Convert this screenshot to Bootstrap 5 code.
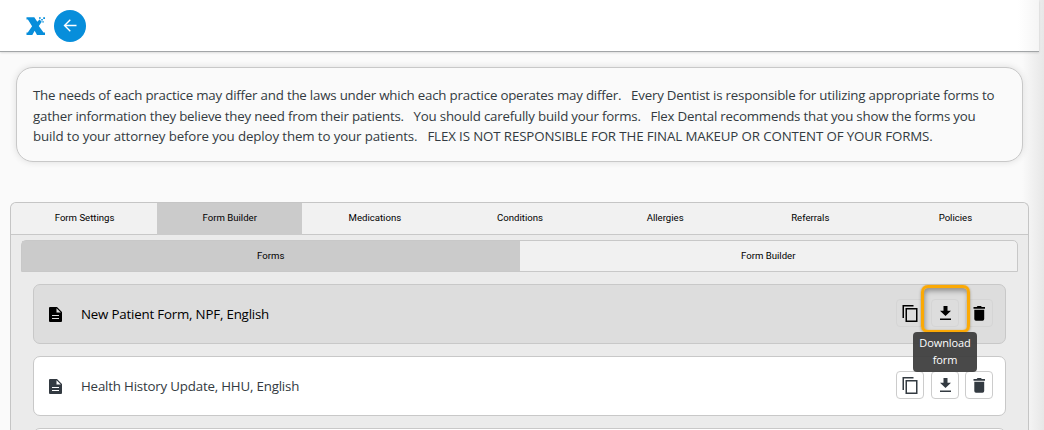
<!DOCTYPE html>
<html lang="en">
<head>
<meta charset="utf-8">
<title>Form Builder</title>
<link href="https://cdn.jsdelivr.net/npm/bootstrap@5.3.0/dist/css/bootstrap.min.css" rel="stylesheet">
<script src="https://cdn.jsdelivr.net/npm/bootstrap@5.3.0/dist/js/bootstrap.bundle.min.js"></script>
<style>
html, body { height: 430px; overflow: hidden; }
body { background: #fafafa; font-family: "Open Sans", "Noto Sans", sans-serif; font-size: 13.3px; color: #333a41; }
.app { height: 430px; }
.edge-fade { top: 0; right: 0; width: 22px; height: 430px; background: linear-gradient(to right, rgba(232,232,232,0), rgba(229,229,229,.9)); z-index: 0; }
.app-bar { height: 52px; width: 1039px; padding-left: 26px; border-bottom: 1px solid #a2a5a7; background: linear-gradient(to right, #fff 1018px, #f5f5f5); box-shadow: 0 1px 2px rgba(0,0,0,.12); z-index: 1; }
.back-btn { width: 32px; height: 32px; background: #078edb; margin-left: 8px; }
.notice { margin: 15px 21px 0 16px; height: 95px; padding: 17px 0 0 16px; border: 1px solid #c8c8c8; border-radius: 17px; background: #fafafa; box-shadow: 0 0 7px rgba(0,0,0,.12); z-index: 1; }
.notice-line { display: block; line-height: 20px; white-space: pre; }
.l1, .l2 { letter-spacing: -.208px; }
.l1 { line-height: 21px; }
.l3 { letter-spacing: -.125px; }
.panel { margin: 40px 15px 0 10px; width: 1019px; height: 228px; overflow: hidden; background: #ebebeb; border: 1px solid #c5c5c5; border-bottom: 0; border-radius: 6px 6px 0 0; z-index: 1; }
.tab-strip { font-family: Roboto, sans-serif; font-size: 9.6px; color: #000; background: #f1f1f1; }
.main-tabs { height: 32px; padding-left: 1px; border-bottom: 1px solid #c8c8c8; border-radius: 5px 5px 0 0; }
.sub-tabs { height: 32px; margin: 5px 10px 0; border: 1px solid #c8c8c8; border-radius: 5px 5px 0 0; }
.tab-item { display: flex; flex: 1 1 0; align-items: center; justify-content: center; padding-bottom: 0; }
.tab-on { background: #cbcbcb; }
.main-tabs .tab-on { margin-bottom: -1px; padding-bottom: 1px; }
.form-row { height: 60px; margin: 12px 22px 0; padding: 0 12px 0 13px; border: 1px solid #c8c8c8; border-radius: 7px; background: #fff; }
.form-row.hovered { background: #ddd; color: #000; }
.form-name { margin-left: 17px; padding-top: 1px; white-space: nowrap; letter-spacing: -.19px; }
.tool-btn { width: 28px; height: 28px; border: 1px solid #ccc; border-radius: 4px; background: transparent; color: inherit; }
.hovered .tool-btn { border-color: #d5d5d5; }
.spot { left: -10px; top: -14px; width: 49px; height: 48px; border: 3px solid #fba905; border-radius: 7px; box-shadow: 0 0 1px #fba905, 0 1px 3px rgba(0,0,0,.3), inset 0 0 1px #fba905, inset 1px 3px 5px rgba(0,0,0,.35); z-index: 3; }
.tip { left: -18px; top: 33px; width: 64px; height: 40px; padding-top: 2px; border-radius: 4px; background: rgba(62,62,62,.94); color: #fff; font-size: 11px; letter-spacing: -.1px; line-height: 17px; z-index: 4; }
.tool-group { margin-top: -2px; }
</style>
</head>
<body>
<div class="app position-relative d-flex flex-column">
  <div class="edge-fade position-absolute"></div>
  <header class="app-bar d-flex align-items-center flex-shrink-0 position-relative">
    <svg width="20" height="20" viewBox="0 0 20 20" fill="#078edb">
      <path d="M.5 1.200h7.800l3 4.600 2.200-2.300 2.300 2.200-3 4.300 4.700 6.600H19v2.400h-8l-2.300-4.200L6.300 19H.5v-2.400h1.300l4.300-6.400L1.900 3.600H.5z"/>
      <path d="M13 1.200h1.700v1.600H13zM15.200 3h1.600v1.500h-1.600zM17.200 1.200H19v1.700h-1.800zM16.300 5.200h1.500v1.400h-1.500z"/>
    </svg>
    <button class="back-btn btn rounded-circle border-0 p-0 d-flex align-items-center justify-content-center" aria-label="Back">
      <svg width="14" height="14" viewBox="0 0 14 14" fill="none" stroke="#fff" stroke-width="1.4"><path d="M13.500 6.500H1.500M7.300.700L1.500 6.500l5.800 5.800"/></svg>
    </button>
  </header>

  <section class="notice position-relative flex-shrink-0">
    <span class="notice-line l1">The needs of each practice may differ and the laws under which each practice operates may differ.&nbsp;&nbsp; Every Dentist is responsible for utilizing appropriate forms to</span>
    <span class="notice-line l2">gather information they believe they need from their patients.&nbsp;&nbsp; You should carefully build your forms.&nbsp;&nbsp; Flex Dental recommends that you show the forms you</span>
    <span class="notice-line l3">build to your attorney before you deploy them to your patients.&nbsp;&nbsp; FLEX IS NOT RESPONSIBLE FOR THE FINAL MAKEUP OR CONTENT OF YOUR FORMS.</span>
  </section>

  <main class="panel position-relative flex-shrink-0">
    <nav class="tab-strip main-tabs d-flex">
      <span class="tab-item">Form Settings</span>
      <span class="tab-item tab-on">Form Builder</span>
      <span class="tab-item">Medications</span>
      <span class="tab-item">Conditions</span>
      <span class="tab-item">Allergies</span>
      <span class="tab-item">Referrals</span>
      <span class="tab-item">Policies</span>
    </nav>
    <nav class="tab-strip sub-tabs d-flex">
      <span class="tab-item tab-on">Forms</span>
      <span class="tab-item">Form Builder</span>
    </nav>

    <svg class="d-none">
      <symbol id="doc" viewBox="0 0 13 15"><path fill="currentColor" fill-rule="evenodd" d="M1 0h7l5 5v9q0 1-1 1H1q-1 0-1-1V1q0-1 1-1zM7.500 1.200V5.500h4.300zM3 8v1h7V8zM3 11v1h7v-1z"/></symbol>
      <symbol id="copy" viewBox="0 0 20 20"><path fill="none" stroke="currentColor" stroke-width="1.500" d="M3.250 15V2.750H13.500M6.250 5.750h10.500v12.500H6.250z"/></symbol>
      <symbol id="down" viewBox="0 0 20 20"><path fill="currentColor" d="M8.500 3h4v4.800H16L10.500 13 5 7.800h3.500zM5 15.500h11V17H5z"/></symbol>
      <symbol id="bin" viewBox="0 0 20 20"><path fill="currentColor" d="M5.300 6.700h9.900V16q0 1.700-1.700 1.700H7q-1.700 0-1.700-1.700zM4.500 4h3.200l.8-1h3.500l.8 1H16v1.700H4.500z"/></symbol>
    </svg>

    <div class="form-row hovered d-flex align-items-center">
      <svg width="17" height="15"><use href="#doc" x="2" width="13" height="15"/></svg>
      <span class="form-name">New Patient Form, NPF, English</span>
      <div class="tool-group d-flex ms-auto">
        <button class="tool-btn p-0 d-flex align-items-center justify-content-center" aria-label="Copy"><svg width="20" height="20"><use href="#copy"/></svg></button>
        <div class="position-relative" style="margin:0 6px 0 7px">
          <button class="tool-btn p-0 d-flex align-items-center justify-content-center" aria-label="Download"><svg width="20" height="20"><use href="#down"/></svg></button>
          <div class="spot position-absolute"></div>
          <div class="tip position-absolute text-center">Download<br>form</div>
        </div>
        <button class="tool-btn p-0 d-flex align-items-center justify-content-center" aria-label="Delete"><svg width="20" height="20"><use href="#bin"/></svg></button>
      </div>
    </div>

    <div class="form-row d-flex align-items-center">
      <svg width="17" height="15"><use href="#doc" x="2" width="13" height="15"/></svg>
      <span class="form-name">Health History Update, HHU, English</span>
      <div class="tool-group d-flex ms-auto">
        <button class="tool-btn p-0 d-flex align-items-center justify-content-center" aria-label="Copy"><svg width="20" height="20"><use href="#copy"/></svg></button>
        <button class="tool-btn p-0 d-flex align-items-center justify-content-center" style="margin:0 6px 0 7px" aria-label="Download"><svg width="20" height="20"><use href="#down"/></svg></button>
        <button class="tool-btn p-0 d-flex align-items-center justify-content-center" aria-label="Delete"><svg width="20" height="20"><use href="#bin"/></svg></button>
      </div>
    </div>

    <div class="form-row"></div>
  </main>
</div>
</body>
</html>
